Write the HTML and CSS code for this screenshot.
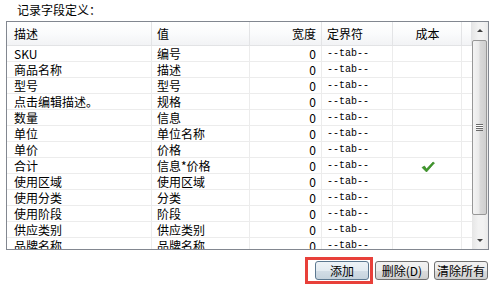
FILE: index.html
```html
<!DOCTYPE html>
<html>
<head>
<meta charset="utf-8">
<link rel="stylesheet" href="styles.css">
</head>
<body>
<div class="title">记录字段定义：</div>
<div class="frame">
  <div class="grid">
    <div class="row head">
      <div class="c c1">描述</div><div class="c c2">值</div><div class="c c3 r">宽度</div><div class="c c4">定界符</div><div class="c c5 ctr">成本</div><div class="c c6"></div>
    </div>
    <div class="row"><div class="c c1">SKU</div><div class="c c2">编号</div><div class="c c3 r">0</div><div class="c c4 mono">--tab--</div><div class="c c5"></div><div class="c c6"></div></div>
    <div class="row"><div class="c c1">商品名称</div><div class="c c2">描述</div><div class="c c3 r">0</div><div class="c c4 mono">--tab--</div><div class="c c5"></div><div class="c c6"></div></div>
    <div class="row"><div class="c c1">型号</div><div class="c c2">型号</div><div class="c c3 r">0</div><div class="c c4 mono">--tab--</div><div class="c c5"></div><div class="c c6"></div></div>
    <div class="row"><div class="c c1">点击编辑描述。</div><div class="c c2">规格</div><div class="c c3 r">0</div><div class="c c4 mono">--tab--</div><div class="c c5"></div><div class="c c6"></div></div>
    <div class="row"><div class="c c1">数量</div><div class="c c2">信息</div><div class="c c3 r">0</div><div class="c c4 mono">--tab--</div><div class="c c5"></div><div class="c c6"></div></div>
    <div class="row"><div class="c c1">单位</div><div class="c c2">单位名称</div><div class="c c3 r">0</div><div class="c c4 mono">--tab--</div><div class="c c5"></div><div class="c c6"></div></div>
    <div class="row"><div class="c c1">单价</div><div class="c c2">价格</div><div class="c c3 r">0</div><div class="c c4 mono">--tab--</div><div class="c c5"></div><div class="c c6"></div></div>
    <div class="row"><div class="c c1">合计</div><div class="c c2">信息*价格</div><div class="c c3 r">0</div><div class="c c4 mono">--tab--</div><div class="c c5 ctr"><svg class="check" width="14" height="12" viewBox="0 0 14 12"><path d="M1 6.5 L3.5 5 L5.5 8 L12 1 L13.5 2 L5.5 11 Z" fill="#3f9a2a" stroke="#2f7a1e" stroke-width="0.6"/></svg></div><div class="c c6"></div></div>
    <div class="row"><div class="c c1">使用区域</div><div class="c c2">使用区域</div><div class="c c3 r">0</div><div class="c c4 mono">--tab--</div><div class="c c5"></div><div class="c c6"></div></div>
    <div class="row"><div class="c c1">使用分类</div><div class="c c2">分类</div><div class="c c3 r">0</div><div class="c c4 mono">--tab--</div><div class="c c5"></div><div class="c c6"></div></div>
    <div class="row"><div class="c c1">使用阶段</div><div class="c c2">阶段</div><div class="c c3 r">0</div><div class="c c4 mono">--tab--</div><div class="c c5"></div><div class="c c6"></div></div>
    <div class="row"><div class="c c1">供应类别</div><div class="c c2">供应类别</div><div class="c c3 r">0</div><div class="c c4 mono">--tab--</div><div class="c c5"></div><div class="c c6"></div></div>
    <div class="row"><div class="c c1">品牌名称</div><div class="c c2">品牌名称</div><div class="c c3 r">0</div><div class="c c4 mono">--tab--</div><div class="c c5"></div><div class="c c6"></div></div>
  </div>
  <div class="sb">
    <div class="sb-btn"><span class="tri up"></span></div>
    <div class="sb-track">
      <div class="thumb"><span class="grip"></span></div>
    </div>
    <div class="sb-btn"><span class="tri down"></span></div>
  </div>
</div>
<div class="actions">
  <div class="hl"><button class="btn primary">添加</button></div>
  <button class="btn">删除(D)</button>
  <button class="btn">清除所有</button>
</div>
</body>
</html>
```
FILE: styles.css
```css
* { box-sizing: border-box; }
body {
  margin: 0;
  background: #fff;
  font-family: "Noto Sans CJK SC", "Liberation Sans", sans-serif;
  font-size: 12px;
  color: #000;
  width: 502px;
  height: 288px;
  overflow: hidden;
}
.title {
  height: 21px;
  padding: 2px 0 0 17px;
  line-height: 16px;
}
.frame {
  margin-left: 6px;
  width: 483px;
  height: 229px;
  border: 1px solid #828790;
  display: flex;
  overflow: hidden;
}
.grid {
  width: 465px;
  display: flex;
  flex-direction: column;
  overflow: hidden;
}
.row {
  display: flex;
  height: 16px;
  flex: none;
  border-bottom: 1px solid #ececec;
}
.row.head {
  height: 24px;
  background: linear-gradient(#ffffff, #fafbfc 50%, #f2f3f5);
  border-bottom: 1px solid #e2e3e5;
}
.c {
  flex: none;
  border-right: 1px solid #ececec;
  padding: 0 6px 0 7px;
  line-height: 15px;
  white-space: nowrap;
  overflow: hidden;
}
.head .c {
  line-height: 23px;
  border-right: 1px solid #e3e4e6;
}
.c1 { width: 145px; }
.c2 { width: 98px; padding-left: 5px; }
.c3 { width: 72px; }
.c4 { width: 71px; padding-left: 5px; }
.c5 { width: 69px; }
.c6 { width: 10px; border-right: none; padding: 0; }
.r { text-align: right; padding-right: 5px; }
.ctr { text-align: center; }
.mono {
  font-family: "Liberation Mono", monospace;
  font-size: 10px;
  letter-spacing: 0;
}
.check { vertical-align: middle; margin-top: -2px; }
.sb {
  width: 16px;
  display: flex;
  flex-direction: column;
  background: linear-gradient(90deg, #e6e6e6, #f2f2f2 40%, #f2f2f2 70%, #e9e9e9);
}
.sb-btn {
  height: 17px;
  flex: none;
  display: flex;
  align-items: center;
  justify-content: center;
}
.tri {
  width: 0;
  height: 0;
  border-left: 3px solid transparent;
  border-right: 3px solid transparent;
}
.tri.up { border-bottom: 3px solid #404040; }
.tri.down { border-top: 3px solid #404040; }
.sb-track {
  flex: 1;
  padding: 1px 1px 17px 0;
  display: flex;
}
.thumb {
  width: 15px;
  height: 175px;
  border: 1px solid #979797;
  border-radius: 2px;
  background: linear-gradient(90deg, #f4f4f4, #eaeaea 45%, #d9d9d9 55%, #cfcfcf);
  display: flex;
  align-items: center;
  justify-content: center;
}
.grip {
  width: 7px;
  height: 7px;
  border-top: 1px solid #6a6a6a;
  border-bottom: 1px solid #6a6a6a;
  background: linear-gradient(#fff 0 1px, #6a6a6a 1px 2px, #fff 2px 3px, #6a6a6a 3px 4px, transparent 4px);
  background-position: 0 0;
}
.actions {
  display: flex;
  align-items: center;
  padding: 7px 0 0 305px;
  gap: 5px;
}
.hl {
  border: 3px solid #e8403a;
  padding: 1px 1px 1px 7px;
  margin-right: -3px;
}
.btn {
  font-family: "Noto Sans CJK SC", "Liberation Sans", sans-serif;
  font-size: 12px;
  height: 19px;
  width: 54px;
  padding: 0;
  line-height: 15px;
  border: 1px solid #707070;
  border-radius: 3px;
  background: linear-gradient(#f2f2f2, #ebebeb 50%, #dddddd 51%, #cfcfcf);
  color: #000;
}
.btn.primary {
  border-color: #3c7fb1;
  background: linear-gradient(#eaf6fd, #d9f0fc 50%, #bee6fd 51%, #a7d9f5);
  background: linear-gradient(#eef3f7, #e3ebf1 50%, #d2dde6 51%, #c6d3dd);
  border-color: #5c7890;
}
```
